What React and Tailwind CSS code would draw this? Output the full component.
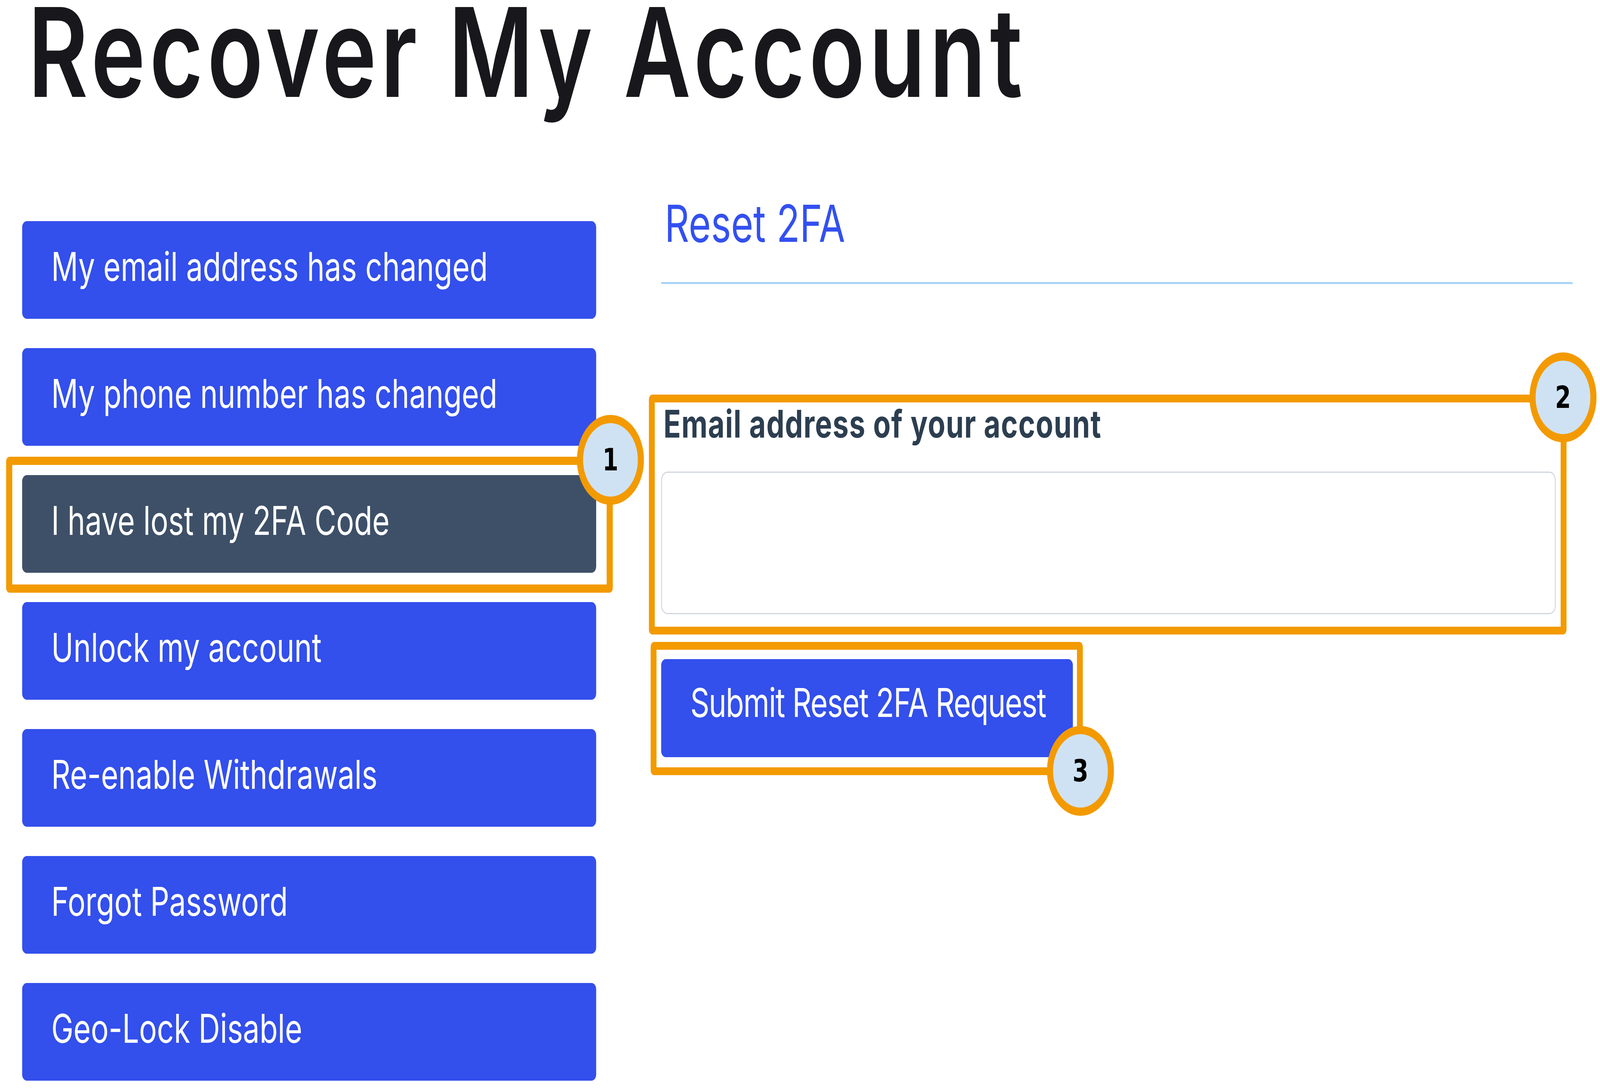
import React, { useState } from "react";

const options = [
  "My email address has changed",
  "My phone number has changed",
  "I have lost my 2FA Code",
  "Unlock my account",
  "Re-enable Withdrawals",
  "Forgot Password",
  "Geo-Lock Disable",
];

// the mockup is drawn on a 5491px wide board; squeeze it if the window is narrower
const BOARD_WIDTH = 5491;

function Marker({ n, className }) {
  return (
    <div
      className={`absolute w-[230px] h-[230px] rounded-full border-[21px] border-[#f39a00] bg-[#cfe2f3] flex items-center justify-center font-['DejaVu_Sans',sans-serif] font-bold text-[78px] text-black ${className}`}
    >
      {n}
    </div>
  );
}

export default function App() {
  const [fit] = useState(() =>
    typeof window === "undefined" ? 1 : Math.min(1, window.innerWidth / BOARD_WIDTH)
  );
  const active = "I have lost my 2FA Code";

  return (
    <div className="w-full h-[2795px] overflow-hidden bg-white">
      <div
        className="relative w-[5491px] h-[2795px] origin-top-left bg-white font-['Inter',sans-serif]"
        style={{ transform: `scaleX(${fit})` }}
      >
        <h1 className="pl-[96px] text-[316px] leading-[266px] font-semibold text-[#18181c] tracking-[14px]">
          Recover My Account
        </h1>

        <div className="flex items-start mt-[214px]">
          {/* left menu */}
          <div className="ml-[76px] mt-[86px] w-[1970px] flex flex-col gap-[75px]">
            {options.map((label) => (
              <button
                key={label}
                className={`h-[250px] rounded-[16px] flex items-center pl-[100px] pb-[18px] text-left text-[102px] text-white ${
                  label === active ? "bg-[#3e5068]" : "bg-[#334fec]"
                }`}
              >
                {label}
              </button>
            ))}
          </div>

          {/* reset form */}
          <div className="ml-[223px] w-[3128px]">
            <h2 className="pl-[12px] text-[131px] leading-[184px] text-[#3350f0]">Reset 2FA</h2>
            <div className="mt-[58px] h-[5px] bg-[#a9d3f8]" />

            <label className="block mt-[298px] pl-[8px] text-[98px] leading-[120px] font-bold tracking-[2px] text-[#2c3e50]">
              Email address of your account
            </label>
            <input
              type="email"
              className="block mt-[62px] w-[3070px] h-[365px] rounded-[22px] border-[3px] border-[#cfd6de] bg-white"
            />

            <button className="mt-[115px] w-[1413px] h-[251px] pl-[100px] pb-[28px] text-left rounded-[16px] bg-[#334fec] text-white text-[102px] tracking-[-2px]">
              Submit Reset 2FA Request
            </button>
          </div>
        </div>

        {/* annotation boxes */}
        <div className="absolute left-[21px] top-[1169px] w-[2082px] h-[348px] rounded-[12px] border-[21px] border-[#f39a00]" />
        <div className="absolute left-[2227px] top-[1010px] w-[3149px] h-[614px] rounded-[12px] border-[20px] border-[#f39a00]" />
        <div className="absolute left-[2233px] top-[1643px] w-[1483px] h-[341px] rounded-[12px] border-[20px] border-[#f39a00]" />

        <Marker n="1" className="left-[1980px] top-[1062px]" />
        <Marker n="2" className="left-[5249px] top-[902px]" />
        <Marker n="3" className="left-[3593px] top-[1858px]" />
      </div>
    </div>
  );
}
